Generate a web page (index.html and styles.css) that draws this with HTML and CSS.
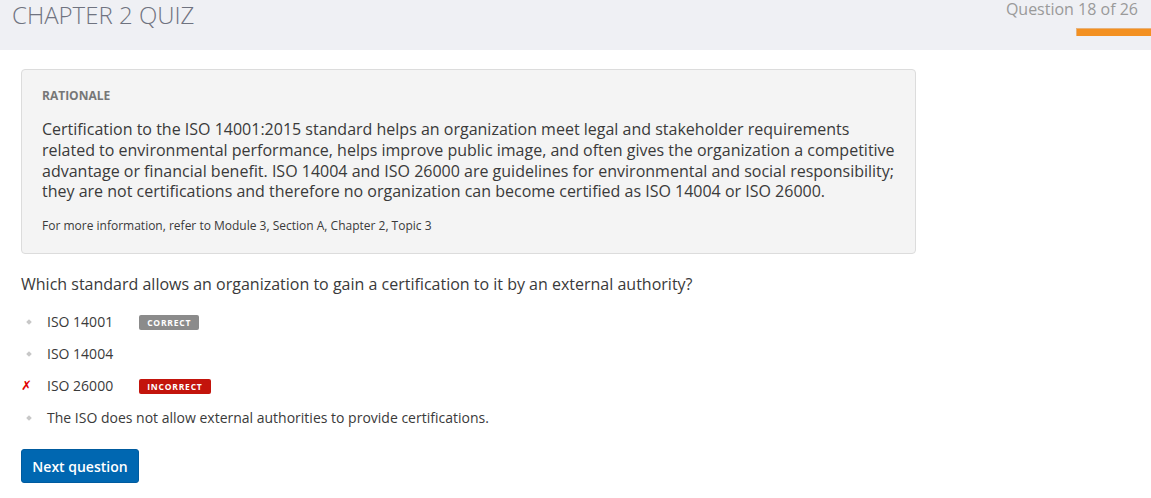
FILE: index.html
```html
<!DOCTYPE html>
<html lang="en">
<head>
<meta charset="utf-8">
<title>Chapter 2 Quiz</title>
<link rel="stylesheet" href="styles.css">
</head>
<body>
<header class="topbar">
  <h1 class="quiz-title">CHAPTER 2 QUIZ</h1>
  <div class="progress">
    <div class="progress-label">Question 18 of 26</div>
    <div class="progress-bar"></div>
  </div>
</header>
<main class="content">
  <section class="rationale">
    <div class="rationale-label">RATIONALE</div>
    <p class="rationale-text">Certification to the ISO 14001:2015 standard helps an organization meet legal and stakeholder requirements related to environmental performance, helps improve public image, and often gives the organization a competitive advantage or financial benefit. ISO 14004 and ISO 26000 are guidelines for environmental and social responsibility; they are not certifications and therefore no organization can become certified as ISO 14004 or ISO 26000.</p>
    <p class="rationale-ref">For more information, refer to Module 3, Section A, Chapter 2, Topic 3</p>
  </section>
  <p class="question">Which standard allows an organization to gain a certification to it by an external authority?</p>
  <ul class="options">
    <li class="option"><span class="marker dot"></span><span class="option-text">ISO 14001</span><span class="badge badge-correct">CORRECT</span></li>
    <li class="option"><span class="marker dot"></span><span class="option-text">ISO 14004</span></li>
    <li class="option"><span class="marker cross">✗</span><span class="option-text">ISO 26000</span><span class="badge badge-incorrect">INCORRECT</span></li>
    <li class="option"><span class="marker dot"></span><span class="option-text">The ISO does not allow external authorities to provide certifications.</span></li>
  </ul>
  <button class="next-btn" type="button">Next question</button>
</main>
</body>
</html>
```

FILE: styles.css
```css
* { box-sizing: border-box; }
body {
  margin: 0;
  font-family: "Open Sans", "Liberation Sans", sans-serif;
  color: #3a3a3a;
  background: #fff;
}
.topbar {
  height: 50px;
  background: #eff0f4;
  display: flex;
  justify-content: space-between;
  align-items: flex-start;
}
.quiz-title {
  margin: 0;
  padding-left: 12px;
  font-size: 24px;
  line-height: 30px;
  font-weight: 300;
  color: #6f7380;
}
.progress {
  display: flex;
  flex-direction: column;
  align-items: flex-end;
}
.progress-label {
  margin-top: -1px;
  padding-right: 13px;
  font-size: 16px;
  line-height: 20px;
  color: #9a9a9a;
}
.progress-bar {
  margin-top: 9px;
  width: 75px;
  height: 8px;
  background: #f39021;
  border-top: 1px solid #e7b27a;
  border-left: 1px solid #e7b27a;
}
.content {
  padding: 19px 21px 0;
}
.rationale {
  width: 895px;
  background: #f4f4f4;
  border: 1px solid #dcdcdc;
  border-radius: 4px;
  padding: 18px 20px 19px 20px;
}
.rationale-label {
  font-size: 12px;
  line-height: 16px;
  font-weight: 700;
  color: #777;
}
.rationale-text {
  margin: 15px 0 0;
  font-size: 16px;
  line-height: 20.8px;
  color: #3a3a3a;
}
.rationale-ref {
  margin: 16px 0 0;
  font-size: 12px;
  line-height: 16px;
  color: #3a3a3a;
}
.question {
  margin: 19px 0 0;
  font-size: 16px;
  line-height: 22px;
  color: #3a3a3a;
}
.options {
  list-style: none;
  margin: 11px 0 0;
  padding: 0;
}
.option {
  display: flex;
  align-items: center;
  height: 32px;
  font-size: 14px;
  line-height: 32px;
}
.marker {
  width: 26px;
  display: flex;
  align-items: center;
}
.dot::before {
  content: "";
  display: block;
  width: 4px;
  height: 4px;
  margin-left: 6px;
  background: #c8c8c8;
  transform: rotate(45deg);
}
.cross {
  color: #e00000;
  font-weight: 700;
  font-style: italic;
  font-size: 13px;
  font-family: "DejaVu Sans", sans-serif;
}
.option-text {
  color: #3a3a3a;
}
.badge {
  margin-left: 26px;
  height: 15px;
  padding: 0 8px;
  border-radius: 2px;
  font-size: 8.5px;
  line-height: 15px;
  font-weight: 700;
  letter-spacing: 0.8px;
  color: #fff;
}
.badge-correct { background: #8b8b8b; }
.badge-incorrect { background: #c3140c; }
.next-btn {
  margin-top: 15px;
  width: 118px;
  height: 34px;
  border: 1px solid #005b9f;
  border-radius: 3px;
  background: #0067b1;
  color: #fff;
  font-family: "Open Sans", "Liberation Sans", sans-serif;
  font-size: 14px;
  font-weight: 600;
  padding: 0;
  cursor: pointer;
}
```
